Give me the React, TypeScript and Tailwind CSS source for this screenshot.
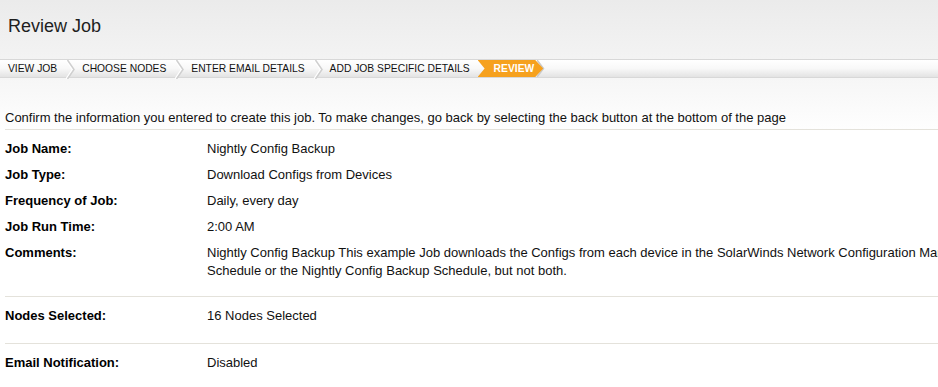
const steps = ['View Job', 'Choose Nodes', 'Enter Email Details', 'Add Job Specific Details', 'Review'];
const activeStep = 4;

const details: { label: string; value: React.ReactNode }[] = [
  { label: 'Job Name:', value: 'Nightly Config Backup' },
  { label: 'Job Type:', value: 'Download Configs from Devices' },
  { label: 'Frequency of Job:', value: 'Daily, every day' },
  { label: 'Job Run Time:', value: '2:00 AM' },
  {
    label: 'Comments:',
    value: (
      <>
        Nightly Config Backup This example Job downloads the Configs from each device in the SolarWinds Network Configuration Manager database. Use either the Nightly Config Backup
        <br />
        Schedule or the Nightly Config Backup Schedule, but not both.
      </>
    ),
  },
];

function Chevron() {
  return (
    <svg width="9" height="19" viewBox="0 0 9 19" className="shrink-0">
      <polyline points="0,0 6.5,9.5 0,19" fill="none" stroke="#ffffff" strokeWidth="1.5" />
      <polyline points="1.5,0 8,9.5 1.5,19" fill="none" stroke="#cfcfcf" strokeWidth="1.5" />
    </svg>
  );
}

function Row({ label, value }: { label: string; value: React.ReactNode }) {
  return (
    <div className="flex py-1 leading-[18px]">
      <div className="w-[202px] shrink-0 font-bold text-black">{label}</div>
      <div className="whitespace-nowrap text-[#111]">{value}</div>
    </div>
  );
}

export default function App() {
  return (
    <div className="w-full min-h-[387px] overflow-hidden bg-white text-[13px] font-['Liberation_Sans',Arial,sans-serif]">
      <div className="bg-gradient-to-b from-[#ebebeb] via-[#f4f4f4] to-[#fefefe]">
        <div className="h-[59px] pl-2 pt-[16px] text-[18px] leading-[21px] text-[#1e1e1e]">Review Job</div>

        <div className="flex h-[19px] items-stretch border-y border-[#d8d8d8] bg-gradient-to-b from-white via-[#f8f8f8] to-[#e3e3e3] text-[10.3px] uppercase leading-[18px]">
          <div className="w-2 shrink-0" />
          {steps.map((s, i) => {
            if (i === activeStep) {
              return (
                <div key={s} className="flex items-stretch">
                  <div className="bg-[#f6a11e] pl-[16px] pr-[9px] font-bold text-white [clip-path:polygon(0_0,calc(100%_-_8px)_0,100%_50%,calc(100%_-_8px)_100%,0_100%,7px_50%)]">
                    {s}
                  </div>
                  <svg width="8" height="17" viewBox="0 0 8 17" className="-ml-[6px] shrink-0">
                    <polyline points="0,0 6.5,8.5 0,17" fill="none" stroke="#c9c9c9" strokeWidth="1.5" />
                  </svg>
                </div>
              );
            }
            const beforeActive = i + 1 === activeStep;
            return (
              <div key={s} className="flex items-stretch">
                <span className={beforeActive ? 'pr-[8px] text-[#111]' : 'pr-[9px] text-[#111]'}>{s}</span>
                {!beforeActive && (
                  <>
                    <Chevron />
                    <div className="w-[7px] shrink-0" />
                  </>
                )}
              </div>
            );
          })}
        </div>

        <div className="pl-[5px] pt-[33px] pb-[4px] leading-[14px] text-[#111]">
          Confirm the information you entered to create this job. To make changes, go back by selecting the back button at the bottom of the page
        </div>
      </div>

      <div className="ml-[5px]">
        <div className="border-t border-[#e4e2db] pt-[6px] pb-[12px]">
          {details.map((d) => (
            <Row key={d.label} label={d.label} value={d.value} />
          ))}
        </div>
        <div className="border-t border-[#e4e2db] pt-[6px] pb-[14px]">
          <Row label="Nodes Selected:" value="16 Nodes Selected" />
        </div>
        <div className="border-t border-[#e4e2db] pt-[6px]">
          <Row label="Email Notification:" value="Disabled" />
        </div>
      </div>
    </div>
  );
}
